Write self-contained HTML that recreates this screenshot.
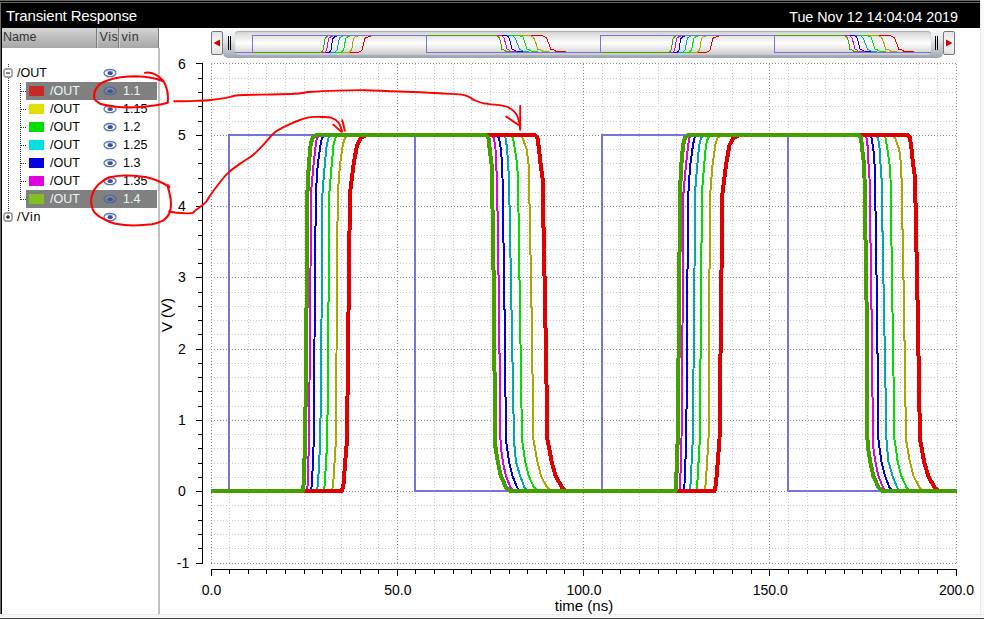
<!DOCTYPE html>
<html><head><meta charset="utf-8">
<style>
html,body{margin:0;padding:0;}
body{width:984px;height:619px;position:relative;overflow:hidden;background:#fff;font-family:"Liberation Sans",sans-serif;}
.a{position:absolute;}
#top0{position:absolute;left:0;top:0;width:980px;height:1px;background:#686868;}
#top1{position:absolute;left:0;top:1px;width:980px;height:1px;background:#000;}
#top2{position:absolute;left:0;top:2px;width:980px;height:1px;background:#686868;}
#lb0{position:absolute;left:0;top:2px;width:1px;height:612px;background:#686868;}
#lb1{position:absolute;left:1px;top:3px;width:1px;height:611px;background:#000;}
#title{position:absolute;left:1px;top:3px;width:979px;height:25px;background:#000;color:#fff;}
#title .l{position:absolute;left:5px;top:4px;font-size:15px;line-height:18px;letter-spacing:-0.15px;}
#title .r{position:absolute;right:22px;top:4.5px;font-size:14.3px;line-height:18px;}
#rstrip{position:absolute;left:980px;top:3px;width:4px;height:612px;background:#f8f8f8;border-left:1px solid #ececec;box-sizing:border-box;}
#bot{position:absolute;left:0;top:614px;width:984px;height:5px;background:linear-gradient(#ececec 0,#ececec 1px,#f6f6f6 1px,#f6f6f6 3px,#fafafa 3px,#fafafa 4px,#444 4px);}
#hdr{position:absolute;left:2px;top:28px;width:157px;height:20px;background:linear-gradient(#d4d4d4,#a6a6a6);}
#hdr div{position:absolute;top:-1.5px;font-size:12.5px;line-height:20px;color:#333;}
.csep{position:absolute;top:0 !important;width:1px;height:20px;background:#7c7c7c;border-right:1px solid #d0d0d0;}
#vsep{position:absolute;left:158px;top:48px;width:2px;height:566px;background:#c0c0c0;}
.tt{position:absolute;font-size:12.5px;line-height:18px;color:#000;white-space:nowrap;}
.tt.s{color:#e8f8f8;}
.sel{position:absolute;left:26px;width:131px;height:18px;background:#808080;}
.sw{position:absolute;left:29px;width:15px;height:10px;}
.eye{position:absolute;}
.box{position:absolute;width:10px;height:10px;box-sizing:border-box;border:2px solid #a8a8a8;border-radius:2.5px;background:#fff;}
.minus{position:absolute;left:1px;top:2.5px;width:4px;height:1.6px;background:#606060;}
.plusv{position:absolute;left:2.2px;top:1px;width:1.6px;height:4px;background:#606060;}
.hd{position:absolute;left:21px;width:5px;height:1px;background:repeating-linear-gradient(90deg,#333 0,#333 1px,transparent 1px,transparent 2px);}
#vd1{position:absolute;left:8px;top:78px;width:1px;height:134px;background:repeating-linear-gradient(#333 0,#333 1px,transparent 1px,transparent 2px);}
#vd0{position:absolute;left:8px;top:64px;width:1px;height:4px;background:repeating-linear-gradient(#333 0,#333 1px,transparent 1px,transparent 2px);}
#vd2{position:absolute;left:20px;top:83px;width:1px;height:117px;background:repeating-linear-gradient(#333 0,#333 1px,transparent 1px,transparent 2px);}
svg text.ax{font-family:"Liberation Sans",sans-serif;font-size:14px;fill:#000;}
#plot{position:absolute;left:0;top:0;}
/* scrollbar */
#sbL{position:absolute;left:211px;top:31px;width:12px;height:24px;box-sizing:border-box;border:1px solid #777;border-radius:2px;background:linear-gradient(#e4e4e4,#fafafa 50%,#e0e0e0);}
#sbR{position:absolute;left:943px;top:31px;width:12px;height:24px;box-sizing:border-box;border:1px solid #777;border-radius:2px;background:linear-gradient(#e4e4e4,#fafafa 50%,#e0e0e0);}
#sbT{position:absolute;left:223px;top:29px;width:720px;height:29px;border-radius:5px;background:linear-gradient(#f8f8fa 0%,#e4e6ea 40%,#b8bec6 80%,#9ca4ae 100%);}
#sbW{position:absolute;left:235px;top:31px;width:696px;height:24px;border-radius:4px;background:linear-gradient(#d4d4d4 0%,#e8e8e8 25%,#ffffff 50%,#e0e0e0 80%,#c8c8c8 100%);box-shadow:inset 0 1px 1px #aaa;}
.grip{position:absolute;top:36px;width:1px;height:14px;background:#000;box-shadow:0 0 0.5px #000;}
</style></head><body>
<div id="top0"></div><div id="top1"></div><div id="top2"></div>
<div id="lb0"></div><div id="lb1"></div>
<div id="title"><div class="l">Transient Response</div><div class="r">Tue Nov 12 14:04:04 2019</div></div>
<div id="rstrip"></div>
<div id="bot"></div>
<div id="hdr"><div style="left:1px">Name</div><div style="left:97.5px;letter-spacing:0.6px">Vis</div><div style="left:119.5px;letter-spacing:0.6px">vin</div>
<div class="csep" style="left:94px"></div><div class="csep" style="left:116px"></div><div class="csep" style="left:156px;border-right:0"></div></div>
<div id="vsep"></div>
<div id="vd0"></div><div id="vd1"></div><div id="vd2"></div>
<svg class="eye" style="left:3px;top:68px" width="10" height="10"><rect x="1" y="1" width="8" height="8" rx="2" fill="#fff" stroke="#a4a4a4" stroke-width="1.8"/><rect x="3" y="4.3" width="4" height="1.5" fill="#5c5c5c"/></svg>
<div class="tt" style="left:17px;top:64px">/OUT</div>
<svg class="eye" style="left:103px;top:68px" width="14" height="10" viewBox="0 0 14 10"><ellipse cx="7" cy="5" rx="6.0" ry="3.7" fill="none" stroke="#4a64a8" stroke-width="1.25" opacity="0.9"/><ellipse cx="7" cy="3.2" rx="3.2" ry="1.2" fill="#8ca0d0" opacity="0.6"/><ellipse cx="7.2" cy="5.2" rx="2.6" ry="1.9" fill="#3c5090"/></svg>
<div class="sel" style="top:82px"></div>
<div class="sw" style="top:86px;background:#c82828"></div>
<div class="tt s" style="left:50px;top:82px">/OUT</div>
<svg class="eye" style="left:103px;top:86px" width="14" height="10" viewBox="0 0 14 10"><ellipse cx="7" cy="5" rx="6.0" ry="3.7" fill="none" stroke="#4a64a8" stroke-width="1.25" opacity="0.9"/><ellipse cx="7" cy="3.2" rx="3.2" ry="1.2" fill="#8ca0d0" opacity="0.6"/><ellipse cx="7.2" cy="5.2" rx="2.6" ry="1.9" fill="#3c5090"/></svg>
<div class="tt s" style="left:123px;top:82px">1.1</div>
<div class="hd" style="top:91px"></div>
<div class="sw" style="top:104px;background:#e0e000"></div>
<div class="tt" style="left:50px;top:100px">/OUT</div>
<svg class="eye" style="left:103px;top:104px" width="14" height="10" viewBox="0 0 14 10"><ellipse cx="7" cy="5" rx="6.0" ry="3.7" fill="none" stroke="#4a64a8" stroke-width="1.25" opacity="0.9"/><ellipse cx="7" cy="3.2" rx="3.2" ry="1.2" fill="#8ca0d0" opacity="0.6"/><ellipse cx="7.2" cy="5.2" rx="2.6" ry="1.9" fill="#3c5090"/></svg>
<div class="tt" style="left:123px;top:100px">1.15</div>
<div class="hd" style="top:109px"></div>
<div class="sw" style="top:122px;background:#00e000"></div>
<div class="tt" style="left:50px;top:118px">/OUT</div>
<svg class="eye" style="left:103px;top:122px" width="14" height="10" viewBox="0 0 14 10"><ellipse cx="7" cy="5" rx="6.0" ry="3.7" fill="none" stroke="#4a64a8" stroke-width="1.25" opacity="0.9"/><ellipse cx="7" cy="3.2" rx="3.2" ry="1.2" fill="#8ca0d0" opacity="0.6"/><ellipse cx="7.2" cy="5.2" rx="2.6" ry="1.9" fill="#3c5090"/></svg>
<div class="tt" style="left:123px;top:118px">1.2</div>
<div class="hd" style="top:127px"></div>
<div class="sw" style="top:140px;background:#00e0e0"></div>
<div class="tt" style="left:50px;top:136px">/OUT</div>
<svg class="eye" style="left:103px;top:140px" width="14" height="10" viewBox="0 0 14 10"><ellipse cx="7" cy="5" rx="6.0" ry="3.7" fill="none" stroke="#4a64a8" stroke-width="1.25" opacity="0.9"/><ellipse cx="7" cy="3.2" rx="3.2" ry="1.2" fill="#8ca0d0" opacity="0.6"/><ellipse cx="7.2" cy="5.2" rx="2.6" ry="1.9" fill="#3c5090"/></svg>
<div class="tt" style="left:123px;top:136px">1.25</div>
<div class="hd" style="top:145px"></div>
<div class="sw" style="top:158px;background:#0000e0"></div>
<div class="tt" style="left:50px;top:154px">/OUT</div>
<svg class="eye" style="left:103px;top:158px" width="14" height="10" viewBox="0 0 14 10"><ellipse cx="7" cy="5" rx="6.0" ry="3.7" fill="none" stroke="#4a64a8" stroke-width="1.25" opacity="0.9"/><ellipse cx="7" cy="3.2" rx="3.2" ry="1.2" fill="#8ca0d0" opacity="0.6"/><ellipse cx="7.2" cy="5.2" rx="2.6" ry="1.9" fill="#3c5090"/></svg>
<div class="tt" style="left:123px;top:154px">1.3</div>
<div class="hd" style="top:163px"></div>
<div class="sw" style="top:176px;background:#e000e0"></div>
<div class="tt" style="left:50px;top:172px">/OUT</div>
<svg class="eye" style="left:103px;top:176px" width="14" height="10" viewBox="0 0 14 10"><ellipse cx="7" cy="5" rx="6.0" ry="3.7" fill="none" stroke="#4a64a8" stroke-width="1.25" opacity="0.9"/><ellipse cx="7" cy="3.2" rx="3.2" ry="1.2" fill="#8ca0d0" opacity="0.6"/><ellipse cx="7.2" cy="5.2" rx="2.6" ry="1.9" fill="#3c5090"/></svg>
<div class="tt" style="left:123px;top:172px">1.35</div>
<div class="hd" style="top:181px"></div>
<div class="sel" style="top:190px"></div>
<div class="sw" style="top:194px;background:#80c020"></div>
<div class="tt s" style="left:50px;top:190px">/OUT</div>
<svg class="eye" style="left:103px;top:194px" width="14" height="10" viewBox="0 0 14 10"><ellipse cx="7" cy="5" rx="6.0" ry="3.7" fill="none" stroke="#4a64a8" stroke-width="1.25" opacity="0.9"/><ellipse cx="7" cy="3.2" rx="3.2" ry="1.2" fill="#8ca0d0" opacity="0.6"/><ellipse cx="7.2" cy="5.2" rx="2.6" ry="1.9" fill="#3c5090"/></svg>
<div class="tt s" style="left:123px;top:190px">1.4</div>
<div class="hd" style="top:199px"></div>
<svg class="eye" style="left:3px;top:212px" width="10" height="10"><rect x="1" y="1" width="8" height="8" rx="2" fill="#fff" stroke="#a4a4a4" stroke-width="1.8"/><rect x="3" y="4.25" width="4" height="1.5" fill="#333"/><rect x="4.25" y="3" width="1.5" height="4" fill="#333"/></svg>
<div class="tt" style="left:17px;top:208px;letter-spacing:0.7px">/Vin</div>
<svg class="eye" style="left:103px;top:212px" width="14" height="10" viewBox="0 0 14 10"><ellipse cx="7" cy="5" rx="6.0" ry="3.7" fill="none" stroke="#4a64a8" stroke-width="1.25" opacity="0.9"/><ellipse cx="7" cy="3.2" rx="3.2" ry="1.2" fill="#8ca0d0" opacity="0.6"/><ellipse cx="7.2" cy="5.2" rx="2.6" ry="1.9" fill="#3c5090"/></svg>
<div id="sbT"></div>
<div id="sbW"></div>
<div id="sbL"><svg width="10" height="22" style="position:absolute;left:1px;top:0"><path d="M0.5,11 L7,7.5 L7,14.5 Z" fill="#d00000"/></svg></div>
<div id="sbR"><svg width="10" height="22" style="position:absolute;left:0;top:0"><path d="M8.5,11 L2,7.5 L2,14.5 Z" fill="#d00000"/></svg></div>
<div class="grip" style="left:228px"></div><div class="grip" style="left:230px"></div>
<div class="grip" style="left:935px"></div><div class="grip" style="left:937px"></div>
<svg id="plot" width="984" height="619" viewBox="0 0 984 619" style="position:absolute;left:0;top:0">
<g shape-rendering="crispEdges">
<line x1="211" y1="548.5" x2="957" y2="548.5" stroke="#c8c8c8" stroke-width="1" stroke-dasharray="1 2" />
<line x1="211" y1="534.5" x2="957" y2="534.5" stroke="#c8c8c8" stroke-width="1" stroke-dasharray="1 2" />
<line x1="211" y1="520.5" x2="957" y2="520.5" stroke="#c8c8c8" stroke-width="1" stroke-dasharray="1 2" />
<line x1="211" y1="505.5" x2="957" y2="505.5" stroke="#c8c8c8" stroke-width="1" stroke-dasharray="1 2" />
<line x1="211" y1="477.5" x2="957" y2="477.5" stroke="#c8c8c8" stroke-width="1" stroke-dasharray="1 2" />
<line x1="211" y1="463.5" x2="957" y2="463.5" stroke="#c8c8c8" stroke-width="1" stroke-dasharray="1 2" />
<line x1="211" y1="448.5" x2="957" y2="448.5" stroke="#c8c8c8" stroke-width="1" stroke-dasharray="1 2" />
<line x1="211" y1="434.5" x2="957" y2="434.5" stroke="#c8c8c8" stroke-width="1" stroke-dasharray="1 2" />
<line x1="211" y1="406.5" x2="957" y2="406.5" stroke="#c8c8c8" stroke-width="1" stroke-dasharray="1 2" />
<line x1="211" y1="391.5" x2="957" y2="391.5" stroke="#c8c8c8" stroke-width="1" stroke-dasharray="1 2" />
<line x1="211" y1="377.5" x2="957" y2="377.5" stroke="#c8c8c8" stroke-width="1" stroke-dasharray="1 2" />
<line x1="211" y1="363.5" x2="957" y2="363.5" stroke="#c8c8c8" stroke-width="1" stroke-dasharray="1 2" />
<line x1="211" y1="334.5" x2="957" y2="334.5" stroke="#c8c8c8" stroke-width="1" stroke-dasharray="1 2" />
<line x1="211" y1="320.5" x2="957" y2="320.5" stroke="#c8c8c8" stroke-width="1" stroke-dasharray="1 2" />
<line x1="211" y1="306.5" x2="957" y2="306.5" stroke="#c8c8c8" stroke-width="1" stroke-dasharray="1 2" />
<line x1="211" y1="292.5" x2="957" y2="292.5" stroke="#c8c8c8" stroke-width="1" stroke-dasharray="1 2" />
<line x1="211" y1="263.5" x2="957" y2="263.5" stroke="#c8c8c8" stroke-width="1" stroke-dasharray="1 2" />
<line x1="211" y1="249.5" x2="957" y2="249.5" stroke="#c8c8c8" stroke-width="1" stroke-dasharray="1 2" />
<line x1="211" y1="235.5" x2="957" y2="235.5" stroke="#c8c8c8" stroke-width="1" stroke-dasharray="1 2" />
<line x1="211" y1="220.5" x2="957" y2="220.5" stroke="#c8c8c8" stroke-width="1" stroke-dasharray="1 2" />
<line x1="211" y1="192.5" x2="957" y2="192.5" stroke="#c8c8c8" stroke-width="1" stroke-dasharray="1 2" />
<line x1="211" y1="178.5" x2="957" y2="178.5" stroke="#c8c8c8" stroke-width="1" stroke-dasharray="1 2" />
<line x1="211" y1="163.5" x2="957" y2="163.5" stroke="#c8c8c8" stroke-width="1" stroke-dasharray="1 2" />
<line x1="211" y1="149.5" x2="957" y2="149.5" stroke="#c8c8c8" stroke-width="1" stroke-dasharray="1 2" />
<line x1="211" y1="121.5" x2="957" y2="121.5" stroke="#c8c8c8" stroke-width="1" stroke-dasharray="1 2" />
<line x1="211" y1="106.5" x2="957" y2="106.5" stroke="#c8c8c8" stroke-width="1" stroke-dasharray="1 2" />
<line x1="211" y1="92.5" x2="957" y2="92.5" stroke="#c8c8c8" stroke-width="1" stroke-dasharray="1 2" />
<line x1="211" y1="78.5" x2="957" y2="78.5" stroke="#c8c8c8" stroke-width="1" stroke-dasharray="1 2" />
<line x1="229.5" y1="64" x2="229.5" y2="564" stroke="#c8c8c8" stroke-width="1" stroke-dasharray="1 2" />
<line x1="248.5" y1="64" x2="248.5" y2="564" stroke="#c8c8c8" stroke-width="1" stroke-dasharray="1 2" />
<line x1="266.5" y1="64" x2="266.5" y2="564" stroke="#c8c8c8" stroke-width="1" stroke-dasharray="1 2" />
<line x1="285.5" y1="64" x2="285.5" y2="564" stroke="#c8c8c8" stroke-width="1" stroke-dasharray="1 2" />
<line x1="304.5" y1="64" x2="304.5" y2="564" stroke="#c8c8c8" stroke-width="1" stroke-dasharray="1 2" />
<line x1="322.5" y1="64" x2="322.5" y2="564" stroke="#c8c8c8" stroke-width="1" stroke-dasharray="1 2" />
<line x1="341.5" y1="64" x2="341.5" y2="564" stroke="#c8c8c8" stroke-width="1" stroke-dasharray="1 2" />
<line x1="360.5" y1="64" x2="360.5" y2="564" stroke="#c8c8c8" stroke-width="1" stroke-dasharray="1 2" />
<line x1="378.5" y1="64" x2="378.5" y2="564" stroke="#c8c8c8" stroke-width="1" stroke-dasharray="1 2" />
<line x1="415.5" y1="64" x2="415.5" y2="564" stroke="#c8c8c8" stroke-width="1" stroke-dasharray="1 2" />
<line x1="434.5" y1="64" x2="434.5" y2="564" stroke="#c8c8c8" stroke-width="1" stroke-dasharray="1 2" />
<line x1="453.5" y1="64" x2="453.5" y2="564" stroke="#c8c8c8" stroke-width="1" stroke-dasharray="1 2" />
<line x1="471.5" y1="64" x2="471.5" y2="564" stroke="#c8c8c8" stroke-width="1" stroke-dasharray="1 2" />
<line x1="490.5" y1="64" x2="490.5" y2="564" stroke="#c8c8c8" stroke-width="1" stroke-dasharray="1 2" />
<line x1="509.5" y1="64" x2="509.5" y2="564" stroke="#c8c8c8" stroke-width="1" stroke-dasharray="1 2" />
<line x1="527.5" y1="64" x2="527.5" y2="564" stroke="#c8c8c8" stroke-width="1" stroke-dasharray="1 2" />
<line x1="546.5" y1="64" x2="546.5" y2="564" stroke="#c8c8c8" stroke-width="1" stroke-dasharray="1 2" />
<line x1="564.5" y1="64" x2="564.5" y2="564" stroke="#c8c8c8" stroke-width="1" stroke-dasharray="1 2" />
<line x1="602.5" y1="64" x2="602.5" y2="564" stroke="#c8c8c8" stroke-width="1" stroke-dasharray="1 2" />
<line x1="620.5" y1="64" x2="620.5" y2="564" stroke="#c8c8c8" stroke-width="1" stroke-dasharray="1 2" />
<line x1="639.5" y1="64" x2="639.5" y2="564" stroke="#c8c8c8" stroke-width="1" stroke-dasharray="1 2" />
<line x1="658.5" y1="64" x2="658.5" y2="564" stroke="#c8c8c8" stroke-width="1" stroke-dasharray="1 2" />
<line x1="676.5" y1="64" x2="676.5" y2="564" stroke="#c8c8c8" stroke-width="1" stroke-dasharray="1 2" />
<line x1="695.5" y1="64" x2="695.5" y2="564" stroke="#c8c8c8" stroke-width="1" stroke-dasharray="1 2" />
<line x1="713.5" y1="64" x2="713.5" y2="564" stroke="#c8c8c8" stroke-width="1" stroke-dasharray="1 2" />
<line x1="732.5" y1="64" x2="732.5" y2="564" stroke="#c8c8c8" stroke-width="1" stroke-dasharray="1 2" />
<line x1="751.5" y1="64" x2="751.5" y2="564" stroke="#c8c8c8" stroke-width="1" stroke-dasharray="1 2" />
<line x1="788.5" y1="64" x2="788.5" y2="564" stroke="#c8c8c8" stroke-width="1" stroke-dasharray="1 2" />
<line x1="807.5" y1="64" x2="807.5" y2="564" stroke="#c8c8c8" stroke-width="1" stroke-dasharray="1 2" />
<line x1="825.5" y1="64" x2="825.5" y2="564" stroke="#c8c8c8" stroke-width="1" stroke-dasharray="1 2" />
<line x1="844.5" y1="64" x2="844.5" y2="564" stroke="#c8c8c8" stroke-width="1" stroke-dasharray="1 2" />
<line x1="862.5" y1="64" x2="862.5" y2="564" stroke="#c8c8c8" stroke-width="1" stroke-dasharray="1 2" />
<line x1="881.5" y1="64" x2="881.5" y2="564" stroke="#c8c8c8" stroke-width="1" stroke-dasharray="1 2" />
<line x1="900.5" y1="64" x2="900.5" y2="564" stroke="#c8c8c8" stroke-width="1" stroke-dasharray="1 2" />
<line x1="918.5" y1="64" x2="918.5" y2="564" stroke="#c8c8c8" stroke-width="1" stroke-dasharray="1 2" />
<line x1="937.5" y1="64" x2="937.5" y2="564" stroke="#c8c8c8" stroke-width="1" stroke-dasharray="1 2" />
<line x1="211" y1="563.5" x2="957" y2="563.5" stroke="#8c8c8c" stroke-width="1" stroke-dasharray="1 2" />
<line x1="211" y1="491.5" x2="957" y2="491.5" stroke="#8c8c8c" stroke-width="1" stroke-dasharray="1 2" />
<line x1="211" y1="420.5" x2="957" y2="420.5" stroke="#8c8c8c" stroke-width="1" stroke-dasharray="1 2" />
<line x1="211" y1="349.5" x2="957" y2="349.5" stroke="#8c8c8c" stroke-width="1" stroke-dasharray="1 2" />
<line x1="211" y1="277.5" x2="957" y2="277.5" stroke="#8c8c8c" stroke-width="1" stroke-dasharray="1 2" />
<line x1="211" y1="206.5" x2="957" y2="206.5" stroke="#8c8c8c" stroke-width="1" stroke-dasharray="1 2" />
<line x1="211" y1="135.5" x2="957" y2="135.5" stroke="#8c8c8c" stroke-width="1" stroke-dasharray="1 2" />
<line x1="211" y1="63.5" x2="957" y2="63.5" stroke="#8c8c8c" stroke-width="1" stroke-dasharray="1 2" />
<line x1="211.5" y1="64" x2="211.5" y2="564" stroke="#8c8c8c" stroke-width="1" stroke-dasharray="1 2" />
<line x1="397.5" y1="64" x2="397.5" y2="564" stroke="#8c8c8c" stroke-width="1" stroke-dasharray="1 2" />
<line x1="583.5" y1="64" x2="583.5" y2="564" stroke="#8c8c8c" stroke-width="1" stroke-dasharray="1 2" />
<line x1="769.5" y1="64" x2="769.5" y2="564" stroke="#8c8c8c" stroke-width="1" stroke-dasharray="1 2" />
<line x1="956.5" y1="64" x2="956.5" y2="564" stroke="#8c8c8c" stroke-width="1" stroke-dasharray="1 2" />
<line x1="202.5" y1="64" x2="202.5" y2="564" stroke="#000" stroke-width="1"/>
<line x1="196" y1="563.5" x2="203" y2="563.5" stroke="#000"/>
<line x1="198" y1="548.5" x2="203" y2="548.5" stroke="#000"/>
<line x1="198" y1="534.5" x2="203" y2="534.5" stroke="#000"/>
<line x1="198" y1="520.5" x2="203" y2="520.5" stroke="#000"/>
<line x1="198" y1="505.5" x2="203" y2="505.5" stroke="#000"/>
<line x1="196" y1="491.5" x2="203" y2="491.5" stroke="#000"/>
<line x1="198" y1="477.5" x2="203" y2="477.5" stroke="#000"/>
<line x1="198" y1="463.5" x2="203" y2="463.5" stroke="#000"/>
<line x1="198" y1="448.5" x2="203" y2="448.5" stroke="#000"/>
<line x1="198" y1="434.5" x2="203" y2="434.5" stroke="#000"/>
<line x1="196" y1="420.5" x2="203" y2="420.5" stroke="#000"/>
<line x1="198" y1="406.5" x2="203" y2="406.5" stroke="#000"/>
<line x1="198" y1="391.5" x2="203" y2="391.5" stroke="#000"/>
<line x1="198" y1="377.5" x2="203" y2="377.5" stroke="#000"/>
<line x1="198" y1="363.5" x2="203" y2="363.5" stroke="#000"/>
<line x1="196" y1="349.5" x2="203" y2="349.5" stroke="#000"/>
<line x1="198" y1="334.5" x2="203" y2="334.5" stroke="#000"/>
<line x1="198" y1="320.5" x2="203" y2="320.5" stroke="#000"/>
<line x1="198" y1="306.5" x2="203" y2="306.5" stroke="#000"/>
<line x1="198" y1="292.5" x2="203" y2="292.5" stroke="#000"/>
<line x1="196" y1="277.5" x2="203" y2="277.5" stroke="#000"/>
<line x1="198" y1="263.5" x2="203" y2="263.5" stroke="#000"/>
<line x1="198" y1="249.5" x2="203" y2="249.5" stroke="#000"/>
<line x1="198" y1="235.5" x2="203" y2="235.5" stroke="#000"/>
<line x1="198" y1="220.5" x2="203" y2="220.5" stroke="#000"/>
<line x1="196" y1="206.5" x2="203" y2="206.5" stroke="#000"/>
<line x1="198" y1="192.5" x2="203" y2="192.5" stroke="#000"/>
<line x1="198" y1="178.5" x2="203" y2="178.5" stroke="#000"/>
<line x1="198" y1="163.5" x2="203" y2="163.5" stroke="#000"/>
<line x1="198" y1="149.5" x2="203" y2="149.5" stroke="#000"/>
<line x1="196" y1="135.5" x2="203" y2="135.5" stroke="#000"/>
<line x1="198" y1="121.5" x2="203" y2="121.5" stroke="#000"/>
<line x1="198" y1="106.5" x2="203" y2="106.5" stroke="#000"/>
<line x1="198" y1="92.5" x2="203" y2="92.5" stroke="#000"/>
<line x1="198" y1="78.5" x2="203" y2="78.5" stroke="#000"/>
<line x1="196" y1="63.5" x2="203" y2="63.5" stroke="#000"/>
<line x1="211" y1="569.5" x2="957" y2="569.5" stroke="#000"/>
<line x1="211.5" y1="569" x2="211.5" y2="576" stroke="#000"/>
<line x1="229.5" y1="569" x2="229.5" y2="574" stroke="#000"/>
<line x1="248.5" y1="569" x2="248.5" y2="574" stroke="#000"/>
<line x1="266.5" y1="569" x2="266.5" y2="574" stroke="#000"/>
<line x1="285.5" y1="569" x2="285.5" y2="574" stroke="#000"/>
<line x1="304.5" y1="569" x2="304.5" y2="574" stroke="#000"/>
<line x1="322.5" y1="569" x2="322.5" y2="574" stroke="#000"/>
<line x1="341.5" y1="569" x2="341.5" y2="574" stroke="#000"/>
<line x1="360.5" y1="569" x2="360.5" y2="574" stroke="#000"/>
<line x1="378.5" y1="569" x2="378.5" y2="574" stroke="#000"/>
<line x1="397.5" y1="569" x2="397.5" y2="576" stroke="#000"/>
<line x1="415.5" y1="569" x2="415.5" y2="574" stroke="#000"/>
<line x1="434.5" y1="569" x2="434.5" y2="574" stroke="#000"/>
<line x1="453.5" y1="569" x2="453.5" y2="574" stroke="#000"/>
<line x1="471.5" y1="569" x2="471.5" y2="574" stroke="#000"/>
<line x1="490.5" y1="569" x2="490.5" y2="574" stroke="#000"/>
<line x1="509.5" y1="569" x2="509.5" y2="574" stroke="#000"/>
<line x1="527.5" y1="569" x2="527.5" y2="574" stroke="#000"/>
<line x1="546.5" y1="569" x2="546.5" y2="574" stroke="#000"/>
<line x1="564.5" y1="569" x2="564.5" y2="574" stroke="#000"/>
<line x1="583.5" y1="569" x2="583.5" y2="576" stroke="#000"/>
<line x1="602.5" y1="569" x2="602.5" y2="574" stroke="#000"/>
<line x1="620.5" y1="569" x2="620.5" y2="574" stroke="#000"/>
<line x1="639.5" y1="569" x2="639.5" y2="574" stroke="#000"/>
<line x1="658.5" y1="569" x2="658.5" y2="574" stroke="#000"/>
<line x1="676.5" y1="569" x2="676.5" y2="574" stroke="#000"/>
<line x1="695.5" y1="569" x2="695.5" y2="574" stroke="#000"/>
<line x1="713.5" y1="569" x2="713.5" y2="574" stroke="#000"/>
<line x1="732.5" y1="569" x2="732.5" y2="574" stroke="#000"/>
<line x1="751.5" y1="569" x2="751.5" y2="574" stroke="#000"/>
<line x1="769.5" y1="569" x2="769.5" y2="576" stroke="#000"/>
<line x1="788.5" y1="569" x2="788.5" y2="574" stroke="#000"/>
<line x1="807.5" y1="569" x2="807.5" y2="574" stroke="#000"/>
<line x1="825.5" y1="569" x2="825.5" y2="574" stroke="#000"/>
<line x1="844.5" y1="569" x2="844.5" y2="574" stroke="#000"/>
<line x1="862.5" y1="569" x2="862.5" y2="574" stroke="#000"/>
<line x1="881.5" y1="569" x2="881.5" y2="574" stroke="#000"/>
<line x1="900.5" y1="569" x2="900.5" y2="574" stroke="#000"/>
<line x1="918.5" y1="569" x2="918.5" y2="574" stroke="#000"/>
<line x1="937.5" y1="569" x2="937.5" y2="574" stroke="#000"/>
<line x1="956.5" y1="569" x2="956.5" y2="576" stroke="#000"/>
<text x="183" y="568" text-anchor="middle" class="ax">-1</text>
<text x="182" y="496" text-anchor="middle" class="ax">0</text>
<text x="182" y="425" text-anchor="middle" class="ax">1</text>
<text x="182" y="354" text-anchor="middle" class="ax">2</text>
<text x="182" y="282" text-anchor="middle" class="ax">3</text>
<text x="182" y="211" text-anchor="middle" class="ax">4</text>
<text x="182" y="140" text-anchor="middle" class="ax">5</text>
<text x="182" y="69" text-anchor="middle" class="ax">6</text>
<text x="211.5" y="595" text-anchor="middle" class="ax">0.0</text>
<text x="397.8" y="595" text-anchor="middle" class="ax">50.0</text>
<text x="584.0" y="595" text-anchor="middle" class="ax">100.0</text>
<text x="770.2" y="595" text-anchor="middle" class="ax">150.0</text>
<text x="956.5" y="595" text-anchor="middle" class="ax">200.0</text>
<text x="584" y="610.5" text-anchor="middle" class="ax" style="font-size:15px">time (ns)</text>
<text transform="translate(172,315) rotate(-90)" x="0" y="0" text-anchor="middle" class="ax" style="font-size:15px">V (V)</text>

</g>
<g>
<path d="M211,491.0 L229,491.0 L229,135.0 L415,135.0 L415,491.0 L602,491.0 L602,135.0 L788,135.0 L788,491.0 L957,491.0" fill="none" stroke="#7474dc" stroke-width="2" shape-rendering="crispEdges"/>
<path d="M211.0,491.0 L332.0,491.0 L333.2,483.9 L336.0,439.7 L337.0,270.3 L337.8,192.7 L340.0,164.9 L342.8,145.0 L345.0,137.8 L349.0,135.0 L519.0,135.0 L522.5,137.8 L526.6,149.2 L528.5,163.5 L529.0,177.7 L531.4,299.5 L533.5,439.7 L534.9,447.6 L537.4,461.8 L541.0,476.0 L547.0,487.4 L551.0,491.0 L704.5,491.0 L705.7,483.9 L708.5,439.7 L709.5,270.3 L710.3,192.7 L712.5,164.9 L715.3,145.0 L717.5,137.8 L721.5,135.0 L891.5,135.0 L895.0,137.8 L899.1,149.2 L901.0,163.5 L901.5,177.7 L903.9,299.5 L906.0,439.7 L907.4,447.6 L909.9,461.8 L913.5,476.0 L919.5,487.4 L923.5,491.0 L957.0,491.0" fill="none" stroke="#a8a800" stroke-width="2" stroke-linejoin="round" shape-rendering="crispEdges"/>
<path d="M211.0,491.0 L323.8,491.0 L324.8,483.9 L327.3,439.7 L328.8,270.3 L329.4,192.7 L331.7,164.9 L333.5,145.0 L335.5,137.8 L339.0,135.0 L510.0,135.0 L513.0,137.8 L514.9,149.2 L517.0,163.5 L518.0,177.7 L519.8,299.5 L522.0,439.7 L523.2,447.6 L525.2,461.8 L528.8,476.0 L534.0,487.4 L538.0,491.0 L696.3,491.0 L697.3,483.9 L699.8,439.7 L701.3,270.3 L701.9,192.7 L704.2,164.9 L706.0,145.0 L708.0,137.8 L711.5,135.0 L882.5,135.0 L885.5,137.8 L887.4,149.2 L889.5,163.5 L890.5,177.7 L892.3,299.5 L894.5,439.7 L895.7,447.6 L897.7,461.8 L901.3,476.0 L906.5,487.4 L910.5,491.0 L957.0,491.0" fill="none" stroke="#00e000" stroke-width="2" stroke-linejoin="round" shape-rendering="crispEdges"/>
<path d="M211.0,491.0 L317.0,491.0 L318.0,483.9 L320.3,439.7 L322.0,270.3 L322.5,192.7 L324.8,164.9 L326.7,145.0 L328.5,137.8 L332.0,135.0 L503.0,135.0 L505.5,137.8 L507.2,149.2 L508.0,163.5 L509.0,177.7 L511.3,299.5 L514.0,439.7 L514.6,447.6 L516.0,461.8 L520.1,476.0 L524.5,487.4 L528.0,491.0 L689.5,491.0 L690.5,483.9 L692.8,439.7 L694.5,270.3 L695.0,192.7 L697.3,164.9 L699.2,145.0 L701.0,137.8 L704.5,135.0 L875.5,135.0 L878.0,137.8 L879.7,149.2 L880.5,163.5 L881.5,177.7 L883.8,299.5 L886.5,439.7 L887.1,447.6 L888.5,461.8 L892.6,476.0 L897.0,487.4 L900.5,491.0 L957.0,491.0" fill="none" stroke="#00a8b0" stroke-width="2" stroke-linejoin="round" shape-rendering="crispEdges"/>
<path d="M211.0,491.0 L311.0,491.0 L312.0,483.9 L313.8,439.7 L315.0,270.3 L315.9,192.7 L317.7,164.9 L320.5,145.0 L322.0,137.8 L325.0,135.0 L496.5,135.0 L499.0,137.8 L500.9,149.2 L502.0,163.5 L502.5,177.7 L504.4,299.5 L506.0,439.7 L507.0,447.6 L509.0,461.8 L512.5,476.0 L517.0,487.4 L520.5,491.0 L683.5,491.0 L684.5,483.9 L686.3,439.7 L687.5,270.3 L688.4,192.7 L690.2,164.9 L693.0,145.0 L694.5,137.8 L697.5,135.0 L869.0,135.0 L871.5,137.8 L873.4,149.2 L874.5,163.5 L875.0,177.7 L876.9,299.5 L878.5,439.7 L879.5,447.6 L881.5,461.8 L885.0,476.0 L889.5,487.4 L893.0,491.0 L957.0,491.0" fill="none" stroke="#0000e0" stroke-width="2" stroke-linejoin="round" shape-rendering="crispEdges"/>
<path d="M211.0,491.0 L307.0,491.0 L307.7,483.9 L309.0,439.7 L310.5,270.3 L311.0,192.7 L313.5,164.9 L315.7,145.0 L317.0,137.8 L320.0,135.0 L491.5,135.0 L494.0,137.8 L495.5,149.2 L496.0,163.5 L497.0,177.7 L498.9,299.5 L500.5,439.7 L500.8,447.6 L502.9,461.8 L505.9,476.0 L510.5,487.4 L514.0,491.0 L679.5,491.0 L680.2,483.9 L681.5,439.7 L683.0,270.3 L683.5,192.7 L686.0,164.9 L688.2,145.0 L689.5,137.8 L692.5,135.0 L864.0,135.0 L866.5,137.8 L868.0,149.2 L868.5,163.5 L869.5,177.7 L871.4,299.5 L873.0,439.7 L873.3,447.6 L875.4,461.8 L878.4,476.0 L883.0,487.4 L886.5,491.0 L957.0,491.0" fill="none" stroke="#e000e0" stroke-width="2" stroke-linejoin="round" shape-rendering="crispEdges"/>
<path d="M211.0,491.0 L342.0,491.0 L343.5,483.9 L347.0,439.7 L349.0,270.3 L350.0,192.7 L353.5,164.9 L357.0,145.0 L361.0,137.8 L367.0,135.0 L535.0,135.0 L537.5,137.8 L539.0,149.2 L540.5,163.5 L542.5,177.7 L545.0,299.5 L547.5,439.7 L549.1,447.6 L551.6,461.8 L555.7,476.0 L562.0,487.4 L566.0,491.0 L714.5,491.0 L716.0,483.9 L719.5,439.7 L721.5,270.3 L722.5,192.7 L726.0,164.9 L729.5,145.0 L733.5,137.8 L739.5,135.0 L907.5,135.0 L910.0,137.8 L911.5,149.2 L913.0,163.5 L915.0,177.7 L917.5,299.5 L920.0,439.7 L921.6,447.6 L924.1,461.8 L928.2,476.0 L934.5,487.4 L938.5,491.0 L957.0,491.0" fill="none" stroke="#e00000" stroke-width="4" stroke-linejoin="round" shape-rendering="crispEdges"/>
<path d="M211.0,491.0 L303.0,491.0 L303.6,483.9 L305.2,439.7 L306.9,270.3 L307.4,192.7 L308.8,164.9 L310.6,145.0 L312.5,137.8 L316.0,135.0 L486.0,135.0 L488.5,137.8 L489.7,149.2 L491.5,163.5 L492.0,177.7 L494.0,299.5 L495.0,439.7 L495.5,447.6 L497.8,461.8 L500.8,476.0 L506.0,487.4 L510.0,491.0 L675.5,491.0 L676.1,483.9 L677.7,439.7 L679.4,270.3 L679.9,192.7 L681.3,164.9 L683.1,145.0 L685.0,137.8 L688.5,135.0 L858.5,135.0 L861.0,137.8 L862.2,149.2 L864.0,163.5 L864.5,177.7 L866.5,299.5 L867.5,439.7 L868.0,447.6 L870.3,461.8 L873.3,476.0 L878.5,487.4 L882.5,491.0 L957.0,491.0" fill="none" stroke="#44a000" stroke-width="4" stroke-linejoin="round" shape-rendering="crispEdges"/>
</g>
<g><path d="M235.0,52.5 L357.4,52.5 L358.8,52.2 L362.1,50.1 L363.9,42.0 L364.9,38.3 L368.1,36.9 L371.4,36.0 L373.3,35.5 L539.2,35.5 L541.5,35.6 L542.9,36.1 L544.3,36.8 L546.2,37.4 L548.5,42.9 L550.9,49.2 L552.4,49.5 L554.7,50.2 L556.2,51.5 L565.2,51.5 L565.2,52.5 L705.4,52.5 L706.8,52.2 L710.1,50.1 L711.9,42.0 L712.9,38.3 L716.1,36.9 L719.4,36.0 L721.3,35.5 L887.2,35.5 L889.5,35.6 L890.9,36.1 L892.3,36.8 L894.2,37.4 L896.5,42.9 L898.9,49.2 L900.4,49.5 L902.7,50.2 L904.2,51.5 L913.2,51.5 L913.2,52.5 L931.0,52.5" fill="none" stroke="#e00000" stroke-width="1" shape-rendering="crispEdges"/>
<path d="M235.0,52.5 L348.0,52.5 L349.2,52.2 L351.8,50.1 L352.7,42.0 L353.5,38.3 L355.5,36.9 L358.1,36.0 L359.2,35.5 L524.2,35.5 L527.5,35.6 L531.3,36.1 L533.1,36.8 L533.6,37.4 L535.8,42.9 L537.8,49.2 L539.1,49.5 L541.4,50.2 L542.9,51.5 L548.9,51.5 L548.9,52.5 L696.0,52.5 L697.2,52.2 L699.8,50.1 L700.7,42.0 L701.5,38.3 L703.5,36.9 L706.1,36.0 L707.2,35.5 L872.2,35.5 L875.5,35.6 L879.3,36.1 L881.1,36.8 L881.6,37.4 L883.8,42.9 L885.8,49.2 L887.1,49.5 L889.4,50.2 L890.9,51.5 L896.9,51.5 L896.9,52.5 L931.0,52.5" fill="none" stroke="#a8a800" stroke-width="1" shape-rendering="crispEdges"/>
<path d="M235.0,52.5 L340.4,52.5 L341.3,52.2 L343.7,50.1 L345.1,42.0 L345.6,38.3 L347.8,36.9 L349.4,36.0 L350.4,35.5 L515.8,35.5 L518.6,35.6 L520.4,36.1 L522.4,36.8 L523.3,37.4 L525.0,42.9 L527.0,49.2 L528.2,49.5 L530.0,50.2 L531.5,51.5 L537.5,51.5 L537.5,52.5 L688.4,52.5 L689.3,52.2 L691.7,50.1 L693.1,42.0 L693.6,38.3 L695.8,36.9 L697.4,36.0 L698.4,35.5 L863.8,35.5 L866.6,35.6 L868.4,36.1 L870.4,36.8 L871.3,37.4 L873.0,42.9 L875.0,49.2 L876.2,49.5 L878.0,50.2 L879.5,51.5 L885.5,51.5 L885.5,52.5 L931.0,52.5" fill="none" stroke="#00e000" stroke-width="1" shape-rendering="crispEdges"/>
<path d="M235.0,52.5 L334.0,52.5 L335.0,52.2 L337.1,50.1 L338.7,42.0 L339.2,38.3 L341.3,36.9 L343.1,36.0 L343.9,35.5 L509.3,35.5 L511.6,35.6 L513.2,36.1 L514.0,36.8 L514.9,37.4 L517.0,42.9 L519.6,49.2 L520.1,49.5 L521.4,50.2 L522.9,51.5 L528.9,51.5 L528.9,52.5 L682.0,52.5 L683.0,52.2 L685.1,50.1 L686.7,42.0 L687.2,38.3 L689.3,36.9 L691.1,36.0 L691.9,35.5 L857.3,35.5 L859.6,35.6 L861.2,36.1 L862.0,36.8 L862.9,37.4 L865.0,42.9 L867.6,49.2 L868.1,49.5 L869.4,50.2 L870.9,51.5 L876.9,51.5 L876.9,52.5 L931.0,52.5" fill="none" stroke="#00a8b0" stroke-width="1" shape-rendering="crispEdges"/>
<path d="M235.0,52.5 L328.4,52.5 L329.4,52.2 L331.0,50.1 L332.2,42.0 L333.0,38.3 L334.7,36.9 L337.3,36.0 L338.0,35.5 L503.2,35.5 L505.6,35.6 L507.3,36.1 L508.4,36.8 L508.8,37.4 L510.6,42.9 L512.1,49.2 L513.0,49.5 L514.9,50.2 L516.4,51.5 L522.4,51.5 L522.4,52.5 L676.4,52.5 L677.4,52.2 L679.0,50.1 L680.2,42.0 L681.0,38.3 L682.7,36.9 L685.3,36.0 L686.0,35.5 L851.2,35.5 L853.6,35.6 L855.3,36.1 L856.4,36.8 L856.8,37.4 L858.6,42.9 L860.1,49.2 L861.0,49.5 L862.9,50.2 L864.4,51.5 L870.4,51.5 L870.4,52.5 L931.0,52.5" fill="none" stroke="#0000e0" stroke-width="1" shape-rendering="crispEdges"/>
<path d="M235.0,52.5 L324.7,52.5 L325.3,52.2 L326.6,50.1 L328.0,42.0 L328.4,38.3 L330.8,36.9 L332.8,36.0 L333.4,35.5 L498.6,35.5 L500.9,35.6 L502.3,36.1 L502.8,36.8 L503.7,37.4 L505.5,42.9 L507.0,49.2 L507.2,49.5 L509.2,50.2 L510.7,51.5 L516.7,51.5 L516.7,52.5 L672.7,52.5 L673.3,52.2 L674.6,50.1 L676.0,42.0 L676.4,38.3 L678.8,36.9 L680.8,36.0 L681.4,35.5 L846.6,35.5 L848.9,35.6 L850.3,36.1 L850.8,36.8 L851.7,37.4 L853.5,42.9 L855.0,49.2 L855.2,49.5 L857.2,50.2 L858.7,51.5 L864.7,51.5 L864.7,52.5 L931.0,52.5" fill="none" stroke="#e000e0" stroke-width="1" shape-rendering="crispEdges"/>
<path d="M235.0,52.5 L320.9,52.5 L321.5,52.2 L323.0,50.1 L324.6,42.0 L325.1,38.3 L326.4,36.9 L328.0,36.0 L328.9,35.5 L493.4,35.5 L495.7,35.6 L496.9,36.1 L498.6,36.8 L499.0,37.4 L500.9,42.9 L501.8,49.2 L502.3,49.5 L504.4,50.2 L505.9,51.5 L511.9,51.5 L511.9,52.5 L668.9,52.5 L669.5,52.2 L671.0,50.1 L672.6,42.0 L673.1,38.3 L674.4,36.9 L676.0,36.0 L676.9,35.5 L841.4,35.5 L843.7,35.6 L844.9,36.1 L846.6,36.8 L847.0,37.4 L848.9,42.9 L849.8,49.2 L850.3,49.5 L852.4,50.2 L853.9,51.5 L859.9,51.5 L859.9,52.5 L931.0,52.5" fill="none" stroke="#44a000" stroke-width="1" shape-rendering="crispEdges"/>
<path d="M235,52.5 L252.3,52.5 L252.3,35.5 L426.0,35.5 L426.0,52.5 L600.3,52.5 L600.3,35.5 L774.0,35.5 L774.0,52.5 L931,52.5" fill="none" stroke="#7474dc" stroke-width="1" shape-rendering="crispEdges"/></g>
<g><path d="M145,72.7 C152,71.5 158,75 163.3,80.8 C166.5,86 168.5,95 167.8,102.7 C160,105 148,106.5 135.8,107.3 C122,107.8 108,106 100,103.7 C95,101 93.5,99 94.1,96.6 C94,92 95,90 96.2,88.5 C99,84 103,82 105.3,81.3 C112,78.5 116,77.8 120.6,77.3 C126,76.6 130,76.3 135.8,76.3 C142,76.5 147,77 151,77.8 C155,78.4 160,80 163.3,81.3" fill="none" stroke="#ff0000" stroke-width="2.1" stroke-linecap="round" stroke-linejoin="round"/>
<path d="M174.1,101.3 C177.7,101.2 189.7,101.1 195.5,100.9 C201.3,100.7 203.6,100.8 208.7,100.3 C213.8,99.8 221.1,98.8 226.0,97.9 C230.9,97.1 232.1,95.8 238.2,95.2 C244.3,94.7 253.1,94.8 262.6,94.6 C272.1,94.4 286.9,94.3 295.0,93.8 C303.1,93.3 304.2,92.3 311.3,91.8 C318.4,91.3 328.9,90.9 337.8,90.6 C346.8,90.3 356.2,90.1 365.0,90.2 C373.8,90.3 381.2,90.9 390.5,91.2 C399.8,91.5 411.9,91.8 421.0,92.2 C430.1,92.6 438.6,93.2 445.4,93.6 C452.2,94.0 457.5,94.0 461.6,94.6 C465.7,95.2 467.8,96.4 469.8,97.3 C471.8,98.2 471.4,98.9 473.8,99.9 C476.2,100.9 479.2,102.5 484.0,103.4 C488.8,104.4 497.9,104.8 502.3,105.6 C506.7,106.4 508.0,107.0 510.4,108.5 C512.8,110.0 515.0,112.1 516.5,114.6 C518.0,117.1 519.0,121.3 519.6,123.7 C520.2,126.1 520.1,128.0 520.2,128.8" fill="none" stroke="#ff0000" stroke-width="1.9" stroke-linecap="round" stroke-linejoin="round"/>
<path d="M520.2,106 L520.2,129.8 M506.3,116.6 L519.6,125.7" fill="none" stroke="#ff0000" stroke-width="1.9" stroke-linecap="round"/>
<path d="M167.9,185.2 C169.5,186.5 169.5,187.5 169.1,187.1 C165,184 162,182.5 158.2,181 C152,178.5 148,177 143.5,176.7 C136,175.8 130,175.4 124,175.5 C117,175.8 113,176.5 109.4,177.3 C104,179.5 101,182 98.4,184.6 C94,189 93,192 92.3,194.4 C91,198 91,200 91.1,202.9 C92,208 93,211 94.8,212.7 C98,216 100,217.5 103.3,218.8 C108,221.5 112,222.8 115.5,223.7 C122,225 128,225.5 133.8,225.5 C140,225.4 146,225 152.1,224.3 C157,223.2 160,222 163,220.6 C166,218 168,216 169.1,213.9 C170.5,210 171,208 171,205.4 C171,200 170.5,197 169.8,194.4 C169,191 168.5,189 167.9,187.1" fill="none" stroke="#ff0000" stroke-width="2.1" stroke-linecap="round" stroke-linejoin="round"/>
<path d="M169.1,211.5 C170.3,211.7 172.8,212.4 176.5,212.7 C180.2,213.0 188.0,213.6 191.1,213.3 C194.2,213.0 192.5,212.6 194.8,210.9 C197.1,209.2 202.7,205.2 205.0,202.9 C207.3,200.7 206.8,200.4 208.9,197.4 C211.0,194.4 214.6,189.1 217.8,185.0 C221.1,180.9 224.2,176.4 228.4,172.6 C232.6,168.8 238.5,164.9 242.7,161.9 C246.8,158.9 249.8,157.8 253.3,154.8 C256.9,151.8 260.4,147.8 264.0,144.1 C267.6,140.4 270.6,135.8 274.7,132.6 C278.8,129.3 284.7,126.7 288.9,124.6 C293.1,122.5 296.4,121.2 300.0,120.0 C303.6,118.8 306.7,117.6 310.2,117.1 C313.7,116.6 317.4,116.9 321.0,117.0 C324.6,117.1 328.7,116.8 331.6,117.8 C334.6,118.8 336.9,120.5 338.7,122.8 C340.5,125.1 341.6,130.2 342.2,131.7" fill="none" stroke="#ff0000" stroke-width="1.9" stroke-linecap="round" stroke-linejoin="round"/>
<path d="M333.3,124.6 L341.3,131.7 M342.2,120.1 L344.9,130.8" fill="none" stroke="#ff0000" stroke-width="1.9" stroke-linecap="round"/></g>
</svg>
</body></html>
